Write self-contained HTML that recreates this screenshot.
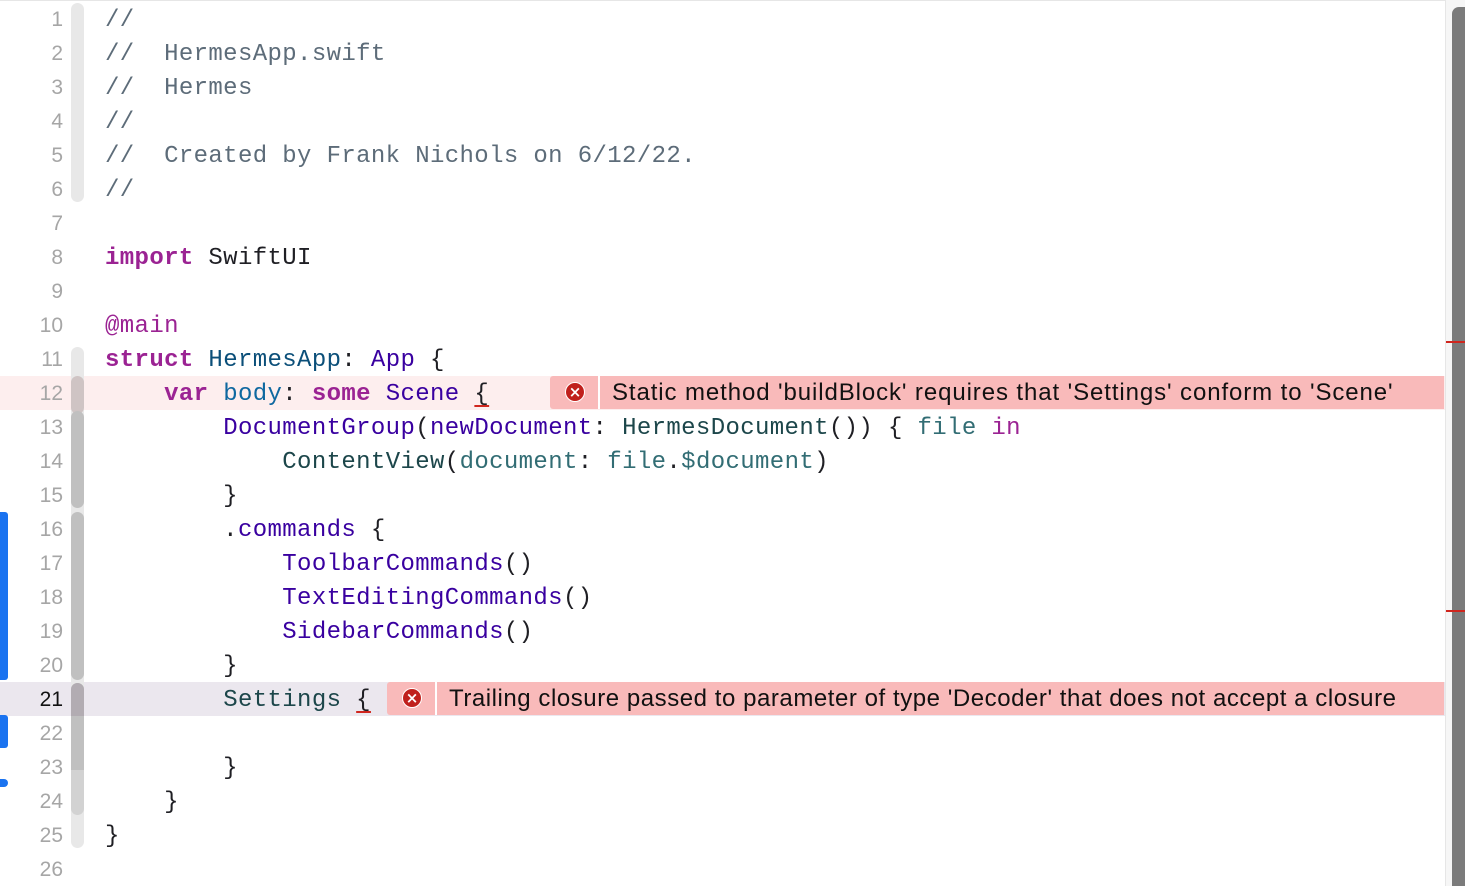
<!DOCTYPE html><html><head><style>
body{margin:0;width:1465px;height:886px;overflow:hidden;background:#fff;position:relative;font-family:"Liberation Mono",monospace}
.row{position:absolute;left:0;width:1445px;height:34px}
.ln{position:absolute;right:1382px;width:60px;text-align:right;font-family:"Liberation Sans",sans-serif;font-size:21px;color:#a6a6a6;line-height:34px;top:1px}
.code{position:absolute;left:105px;top:2px;font-size:24px;letter-spacing:0.37px;line-height:34px;white-space:pre;color:#1f1f24}
.c{color:#5d6c79}.k{color:#9b2393;font-weight:bold}.t{color:#3900a0}.d{color:#0b4f79}.b{color:#0f68a0}.v{color:#326d74}.n{color:#1c464a}
.u{text-decoration:underline;text-decoration-color:#d0261e;text-decoration-thickness:2px;text-underline-offset:5px}
.rib{position:absolute;left:71px;width:13px;border-radius:7px}
.err{position:absolute;top:0;height:33px;background:#f9baba;border-radius:3px 0 0 3px}
.err .ic{position:absolute;left:0;top:0;width:48px;height:33px;border-right:2px solid #fff}
.err .ic span{position:absolute;left:15px;top:6px;width:18px;height:18px;border-radius:50%;background:#c0201c;border:1.5px solid #fff;color:#fff;font:bold 15px/18px "DejaVu Sans",sans-serif;text-align:center}
.err .m{position:absolute;left:62px;top:0;font-family:"Liberation Sans",sans-serif;font-size:24px;line-height:33px;color:#111;white-space:nowrap}
</style></head><body>
<div style="position:absolute;left:0;top:0;width:1445px;height:1px;background:#e6e6e6"></div>
<div class="row" style="top:376px;background:#fdeeee"></div>
<div class="row" style="top:682px;background:#ebe7ee"></div>
<div class="rib" style="top:3px;height:199px;background:#e8e8e8"></div>
<div class="rib" style="top:347px;height:501px;background:#e8e8e8"></div>
<div class="rib" style="top:376px;height:38px;background:#cfc4c4"></div>
<div class="rib" style="top:411px;height:97px;background:#c0c0c0"></div>
<div class="rib" style="top:512px;height:168px;background:#c0c0c0"></div>
<div class="rib" style="top:683px;height:97px;background:#c0c0c0"></div>
<div class="rib" style="top:683px;height:33px;background:#b2acb2;border-radius:7px 7px 0 0"></div>
<div class="rib" style="top:770px;height:45px;background:#d2d2d2;border-radius:0 0 7px 7px"></div>
<div style="position:absolute;left:0;top:512px;width:8px;height:168px;background:#1a73f0;border-radius:0 3px 3px 0"></div>
<div style="position:absolute;left:0;top:715px;width:8px;height:33px;background:#1a73f0;border-radius:0 3px 3px 0"></div>
<div style="position:absolute;left:0;top:779px;width:8px;height:8px;background:#1a73f0;border-radius:0 4px 4px 0"></div>
<div style="position:absolute;left:1445px;top:0;width:20px;height:886px;background:#f6f6f6;border-left:1px solid #e6e6e6"></div>
<div style="position:absolute;left:1452px;top:7px;width:13px;height:879px;background:#7b7b7b;border-radius:7px 0 0 0"></div>
<div style="position:absolute;left:1446px;top:341px;width:19px;height:2px;background:#d0261e"></div>
<div style="position:absolute;left:1446px;top:610px;width:19px;height:2px;background:#d0261e"></div>

<div class="row" style="top:2px"><div class="ln">1</div><div class="code c">//</div></div>
<div class="row" style="top:36px"><div class="ln">2</div><div class="code c">//  HermesApp.swift</div></div>
<div class="row" style="top:70px"><div class="ln">3</div><div class="code c">//  Hermes</div></div>
<div class="row" style="top:104px"><div class="ln">4</div><div class="code c">//</div></div>
<div class="row" style="top:138px"><div class="ln">5</div><div class="code c">//  Created by Frank Nichols on 6/12/22.</div></div>
<div class="row" style="top:172px"><div class="ln">6</div><div class="code c">//</div></div>
<div class="row" style="top:206px"><div class="ln">7</div></div>
<div class="row" style="top:240px"><div class="ln">8</div><div class="code"><span class="k">import</span> SwiftUI</div></div>
<div class="row" style="top:274px"><div class="ln">9</div></div>
<div class="row" style="top:308px"><div class="ln">10</div><div class="code"><span class="k" style="font-weight:normal">@main</span></div></div>
<div class="row" style="top:342px"><div class="ln">11</div><div class="code"><span class="k">struct</span> <span class="d">HermesApp</span>: <span class="t">App</span> {</div></div>
<div class="row" style="top:376px"><div class="ln">12</div><div class="code">    <span class="k">var</span> <span class="b">body</span>: <span class="k">some</span> <span class="t">Scene</span> <span class="u">{</span></div>
<div class="err" style="left:550px;width:894px"><div class="ic"><span>×</span></div><div class="m" style="letter-spacing:0.9px">Static method 'buildBlock' requires that 'Settings' conform to 'Scene'</div></div></div>
<div class="row" style="top:410px"><div class="ln">13</div><div class="code">        <span class="t">DocumentGroup</span>(<span class="t">newDocument</span>: <span class="n">HermesDocument</span>()) { <span class="v">file</span> <span class="k" style="font-weight:normal">in</span></div></div>
<div class="row" style="top:444px"><div class="ln">14</div><div class="code">            <span class="n">ContentView</span>(<span class="v">document</span>: <span class="v">file</span>.<span class="v">$document</span>)</div></div>
<div class="row" style="top:478px"><div class="ln">15</div><div class="code">        }</div></div>
<div class="row" style="top:512px"><div class="ln">16</div><div class="code">        .<span class="t">commands</span> {</div></div>
<div class="row" style="top:546px"><div class="ln">17</div><div class="code">            <span class="t">ToolbarCommands</span>()</div></div>
<div class="row" style="top:580px"><div class="ln">18</div><div class="code">            <span class="t">TextEditingCommands</span>()</div></div>
<div class="row" style="top:614px"><div class="ln">19</div><div class="code">            <span class="t">SidebarCommands</span>()</div></div>
<div class="row" style="top:648px"><div class="ln">20</div><div class="code">        }</div></div>
<div class="row" style="top:682px"><div class="ln" style="color:#111">21</div><div class="code">        <span class="n">Settings</span> <span class="u">{</span></div>
<div class="err" style="left:387px;width:1057px"><div class="ic"><span>×</span></div><div class="m" style="letter-spacing:0.55px">Trailing closure passed to parameter of type 'Decoder' that does not accept a closure</div></div></div>
<div class="row" style="top:716px"><div class="ln">22</div></div>
<div class="row" style="top:750px"><div class="ln">23</div><div class="code">        }</div></div>
<div class="row" style="top:784px"><div class="ln">24</div><div class="code">    }</div></div>
<div class="row" style="top:818px"><div class="ln">25</div><div class="code">}</div></div>
<div class="row" style="top:852px"><div class="ln">26</div></div>
</body></html>
